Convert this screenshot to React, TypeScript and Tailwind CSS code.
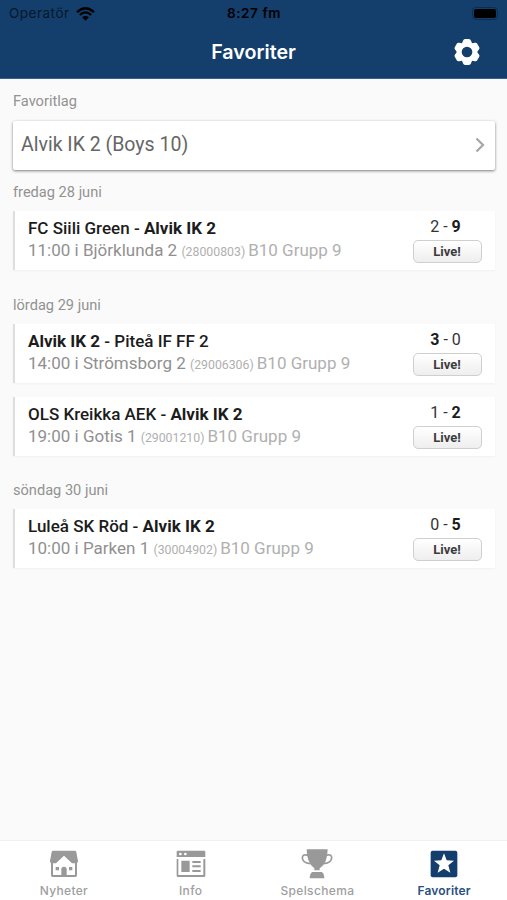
import type { ReactNode } from "react";

interface Match {
  id: string;
  home: string;
  away: string;
  time: string;
  venue: string;
  group: string;
  score: [number, number];
}

interface MatchDay {
  date: string;
  matches: Match[];
}

const TEAM = "Alvik IK 2";

const DAYS: MatchDay[] = [
  {
    date: "fredag 28 juni",
    matches: [
      {
        id: "28000803",
        home: "FC Siili Green",
        away: "Alvik IK 2",
        time: "11:00",
        venue: "Björklunda 2",
        group: "B10 Grupp 9",
        score: [2, 9],
      },
    ],
  },
  {
    date: "lördag 29 juni",
    matches: [
      {
        id: "29006306",
        home: "Alvik IK 2",
        away: "Piteå IF FF 2",
        time: "14:00",
        venue: "Strömsborg 2",
        group: "B10 Grupp 9",
        score: [3, 0],
      },
      {
        id: "29001210",
        home: "OLS Kreikka AEK",
        away: "Alvik IK 2",
        time: "19:00",
        venue: "Gotis 1",
        group: "B10 Grupp 9",
        score: [1, 2],
      },
    ],
  },
  {
    date: "söndag 30 juni",
    matches: [
      {
        id: "30004902",
        home: "Luleå SK Röd",
        away: "Alvik IK 2",
        time: "10:00",
        venue: "Parken 1",
        group: "B10 Grupp 9",
        score: [0, 5],
      },
    ],
  },
];

const GEAR_TEETH = [0, 60, 120, 180, 240, 300];

const WifiIcon = () => (
  <svg className="w-[19px] h-[14px]" viewBox="0 0 57 42">
    <g fill="none" stroke="#000" strokeWidth="6.5">
      <path d="M3 15.500Q28.500 -8 54 15.500" />
      <path d="M11.500 24Q28.500 8 45.500 24" />
    </g>
    <path d="M28.500 41L18.500 31Q28.500 23 38.500 31Z" fill="#000" />
  </svg>
);

const GearIcon = () => (
  <svg className="w-[26px] h-[26px]" viewBox="-39 -39 78 78">
    <circle r="23.500" fill="none" stroke="#fff" strokeWidth="15" />
    {GEAR_TEETH.map((angle) => (
      <path
        key={angle}
        d="M-15 -26L-12 -34Q-10 -39 -6 -39H6Q10 -39 12 -34L15 -26Z"
        fill="#fff"
        transform={`rotate(${angle})`}
      />
    ))}
  </svg>
);

const HomeIcon = () => (
  <svg className="w-[30px] h-[30px]" viewBox="0 0 90 90">
    <path
      d="M12 5h66q3 0 4 4l5 27q.5 5-3 5v38q0 5-5 5H11q-5 0-5-5V41q-4 0-3-5L8 9q1-4 4-4Z"
      fill="#999"
    />
    <path d="M45 20L69 43H78V78H12V43H21Z" fill="#fff" />
    <path d="M20 54h10v10H20zM60 54h10v10H60z" fill="#999" />
    <path d="M37 84V61q0-8 8-8t8 8v23Z" fill="#999" />
  </svg>
);

const InfoIcon = () => (
  <svg className="w-[30px] h-[30px]" viewBox="0 0 90 90">
    <path d="M5 5h80q3 0 3 3v16H2V8q0-3 3-3Z" fill="#999" />
    <path
      fillRule="evenodd"
      d="M2 30h5v48h75V30h6v50q0 4-4 4H6q-4 0-4-4Z"
      fill="#999"
    />
    <path d="M16 35h25v34H16zM49 36h25v6H49zM49 49h25v6H49zM49 63h25v6H49z" fill="#999" />
    <circle cx="13" cy="15" r="4" fill="#fff" />
    <circle cx="28" cy="15" r="4" fill="#fff" />
  </svg>
);

const TrophyIcon = () => (
  <svg className="w-[32px] h-[30px]" viewBox="0 0 96 90">
    <path d="M17 1h63q0 18-5 32-5 15-19 25v6H40v-6Q27 48 22 33 17 19 17 1Z" fill="#999" />
    <g fill="none" stroke="#999" strokeWidth="5">
      <path d="M21 19Q5 14 4 26q0 15 24 18" />
      <path d="M76 19q15-5 16 7 0 15-24 18" />
    </g>
    <path d="M34 69h28q7 2 8 19H26q1-17 8-19Z" fill="#999" />
  </svg>
);

const StarIcon = () => (
  <svg className="w-[28px] h-[28px]" viewBox="0 0 84 84">
    <rect x="2" y="2" width="80" height="80" rx="6" fill="#143e6d" />
    <path
      d="M42 10l8 21 22 1-17 14 6 22-19-12-19 12 6-22L12 32l22-1Z"
      fill="#fff"
    />
  </svg>
);

const MatchRow: React.FC<{ match: Match }> = ({ match }) => {
  const [homeGoals, awayGoals] = match.score;
  const isHome = match.home === TEAM;

  return (
    <div className="flex h-[59px] justify-between border-l-2 border-[#dedede] bg-white pl-[13px] pr-[13px] shadow-[0_1px_2px_rgba(0,0,0,0.04)]">
      <div className="whitespace-nowrap pt-[6px]">
        <div className="text-[17px] leading-[22px] font-medium text-[#1c1c1c]">
          <span className={isHome ? "font-bold" : ""}>{match.home}</span>
          {" - "}
          <span className={isHome ? "" : "font-bold"}>{match.away}</span>
        </div>
        <div className="text-[17px] leading-[22px] text-[#909090]">
          {match.time} i {match.venue}{" "}
          <span className="text-[#b0b0b0]">
            <span className="text-[12.300px]">({match.id})</span>
            <span className="ml-[3px]">{match.group}</span>
          </span>
        </div>
      </div>
      <div className="flex w-[69px] flex-col items-center pt-[5px]">
        <div className="pr-[4px] text-[16px] leading-[22px] text-[#333]">
          <span className={homeGoals > awayGoals ? "font-bold text-[#1c1c1c]" : ""}>
            {homeGoals}
          </span>
          {" - "}
          <span className={awayGoals > homeGoals ? "font-bold text-[#1c1c1c]" : ""}>
            {awayGoals}
          </span>
        </div>
        <button className="mt-[2px] h-[23px] w-[69px] rounded-[5px] border border-[#cfcfcf] bg-linear-to-b from-white to-[#eeeeee] pr-px text-[13px] leading-[21px] font-bold text-[#3c3c3c]">
          Live!
        </button>
      </div>
    </div>
  );
};

interface TabProps {
  label: string;
  active?: boolean;
  children: ReactNode;
}

const Tab: React.FC<TabProps> = ({ label, active, children }) => (
  <button className="flex flex-1 flex-col items-center pt-[7px] pl-px">
    <span className="flex h-[31px] items-center justify-center">{children}</span>
    <span
      className={
        active
          ? "mt-[4px] text-[12px] leading-4 font-semibold tracking-[0.200px] text-[#2a5080]"
          : "mt-[4px] text-[12px] leading-4 font-medium tracking-[0.350px] text-[#a0a0a0]"
      }
    >
      {label}
    </span>
  </button>
);

export default function App() {
  return (
    <div className="flex h-[900px] w-[507px] flex-col overflow-hidden bg-[#fafafa] font-[Roboto,sans-serif]">
      <header className="h-[79px] shrink-0 border-b border-[#3c6090] bg-[#143e6b] font-[Inter,sans-serif]">
        <div className="grid h-[27px] grid-cols-3 items-center px-[9px] text-[13.500px] text-black">
          <div className="flex items-center gap-[6px]">
            <span className="tracking-[0.500px] text-[#06182b]">Operatör</span>
            <WifiIcon />
          </div>
          <div className="pl-px text-center font-semibold tracking-[0.600px]">8:27 fm</div>
          <div className="flex justify-end">
            <div className="flex items-center rounded-[4px] border border-[#0d2d50] p-px">
              <div className="h-[9px] w-[22px] rounded-[2px] bg-black" />
            </div>
          </div>
        </div>
        <div className="grid h-[50px] grid-cols-3 items-center px-[27px]">
          <h1 className="col-start-2 pt-[2px] text-center text-[19.700px] font-semibold text-white">
            Favoriter
          </h1>
          <button className="justify-self-end">
            <GearIcon />
          </button>
        </div>
      </header>

      <main className="flex-1 pt-[11px] pr-[12px] pl-[13px]">
        <h2 className="text-[14.600px] leading-[22px] text-[#929292]">Favoritlag</h2>
        <button className="mt-[9px] flex h-[49px] w-full items-center justify-between rounded-[2px] bg-white pr-[9px] pb-[2px] pl-[8px] text-[19.500px] text-[#666] shadow-[0_1px_3px_rgba(0,0,0,0.5)]">
          <span>Alvik IK 2 (Boys 10)</span>
          <svg className="h-4 w-3" viewBox="0 0 12 16" fill="none" stroke="#a8a8a8" strokeWidth="2.300">
            <path d="M2.500 1.500L9 8l-6.500 6.500" />
          </svg>
        </button>
        <div className="mt-[11px] flex flex-col gap-[23.600px]">
          {DAYS.map((day) => (
            <section key={day.date}>
              <h2 className="text-[14.600px] leading-[22px] text-[#929292]">{day.date}</h2>
              <div className="mt-[8px] flex flex-col gap-[14px]">
                {day.matches.map((match) => (
                  <MatchRow key={match.id} match={match} />
                ))}
              </div>
            </section>
          ))}
        </div>
      </main>

      <nav className="flex h-[60px] shrink-0 border-t border-[#f0f0f0] bg-white font-[Inter,sans-serif]">
        <Tab label="Nyheter">
          <HomeIcon />
        </Tab>
        <Tab label="Info">
          <InfoIcon />
        </Tab>
        <Tab label="Spelschema">
          <TrophyIcon />
        </Tab>
        <Tab label="Favoriter" active>
          <StarIcon />
        </Tab>
      </nav>
    </div>
  );
}
